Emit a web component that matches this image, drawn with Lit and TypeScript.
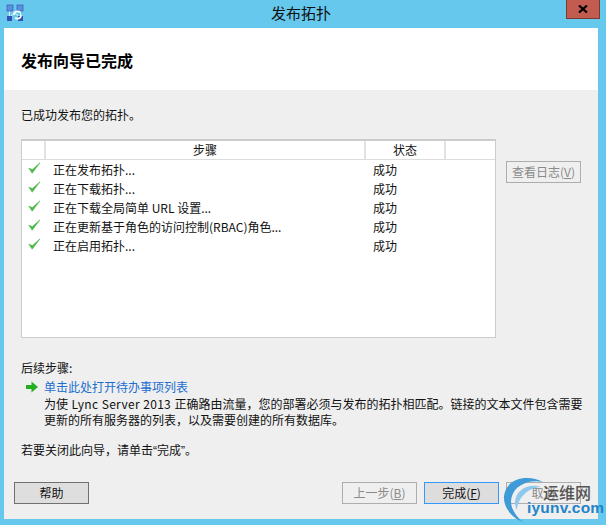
import { LitElement, html, css, svg } from "lit";
import { customElement } from "lit/decorators.js";

const rows = ["正在发布拓扑...", "正在下载拓扑...", "正在下载全局简单 URL 设置...", "正在更新基于角色的访问控制(RBAC)角色...", "正在启用拓扑..."];

const check = svg`<svg class="chk" width="13" height="12" viewBox="0 0 13 12"><path d="M0.8 6.2 L4.2 11.2 L12 0.8 L4.4 7.6 Z" fill="#4dbb4a" stroke="#4dbb4a" stroke-width=".6" stroke-linejoin="round"/></svg>`;

@customElement("app-root")
export class AppRoot extends LitElement {
  static styles = css`
    :host { display: block; width: 606px; height: 525px; overflow: hidden; position: relative; font-family: "Noto Sans CJK SC", "Noto Sans", sans-serif; font-size: 12px; color: #111; }
    .win { width: 606px; height: 525px; background: #65c8ec; display: flex; flex-direction: column; box-sizing: border-box; padding: 0 8px 6px 4px; }
    .title { height: 28px; flex: none; display: flex; align-items: center; justify-content: center; position: relative; font-size: 15px; padding-bottom: 4px; box-sizing: border-box; }
    .appicon { position: absolute; left: 2px; top: 4px; }
    .close { position: absolute; left: 562px; top: 0; width: 34px; height: 19px; background: #c35c50; border: 1px solid #7a3a34; border-top: none; box-sizing: border-box; display: flex; align-items: center; justify-content: center; }
    .body { flex: 1; background: #efefef; display: flex; flex-direction: column; min-height: 0; }
    .head { height: 62px; flex: none; background: #fff; box-sizing: border-box; padding: 21px 0 0 17px; font-size: 16px; font-weight: 700; line-height: 22px; color: #000; }
    .main { flex: 1; padding: 16px 17px 0; position: relative; display: flex; flex-direction: column; }
    .intro { line-height: 18px; height: 18px; }
    .mid { display: flex; margin-top: 15px; }
    .table { width: 475px; height: 199px; box-sizing: border-box; background: #fff; border: 1px solid #ccc; border-top-width: 2px; }
    .thead { display: grid; grid-template-columns: 24px 320px 80px 1fr; height: 18px; border-bottom: 1px solid #dcdcdc; box-sizing: content-box; }
    .th { text-align: center; line-height: 18px; border-right: 2px solid #e2e2e2; box-sizing: border-box; }
    .th:last-child { border-right: none; }
    .row { display: grid; grid-template-columns: 7px 24px 320px 1fr; height: 19px; line-height: 19px; align-items: center; }
    .chk { display: block; margin-top: -3px; grid-column: 1 / 3; margin-left: 6px; }
    .step { white-space: pre; }
    .log { margin: 22px 0 0 10px; width: 75px; height: 22px; box-sizing: border-box; border: 1px solid #adadad; color: #8a8a8a; text-align: center; line-height: 20px; white-space: nowrap; }
    u { text-underline-offset: 1px; }
    .next { margin-top: 21px; line-height: 18px; }
    .linkrow { display: flex; align-items: center; height: 19px; }
    .arrow { margin: 0 6px 0 5px; flex: none; }
    .link { color: #1c6ed0; }
    .desc { margin: 0 0 0 23px; line-height: 16px; width: 540px; }
    .lat { letter-spacing: 0.3px; word-spacing: 0.4px; }
    .close-note { margin-top: 13px; line-height: 18px; }
    .q { font-family: "Liberation Sans", sans-serif; }
    .foot { position: absolute; left: 10px; right: 17px; top: 392px; display: flex; align-items: center; }
    .btn { width: 75px; height: 22px; box-sizing: border-box; border: 1px solid #707070; background: #dedede; text-align: center; line-height: 20px; white-space: nowrap; }
    .spacer { flex: 1; }
    .btn.dis { background: transparent; border-color: #adadad; color: #8a8a8a; }
    .btn.pri { border-color: #3399ff; background: #dddddd; margin: 0 7px; }
    .wm { position: absolute; left: 503px; top: 476px; width: 103px; height: 49px; pointer-events: none; }
    .wmcn { position: absolute; left: 40px; top: 5px; font-size: 16px; font-weight: 500; color: #555; line-height: 22px; white-space: nowrap; }
    .wmen { position: absolute; left: 24px; top: 22px; font-family: "Liberation Sans", sans-serif; font-size: 15.5px; font-weight: 700; color: #2383c9; line-height: 20px; letter-spacing: 0.2px; white-space: nowrap; }
    .wmarc { position: absolute; left: 0; top: 0; }
  `;

  render() {
    return html`<div class="win">
      <div class="title">
        <svg class="appicon" width="18" height="18" viewBox="0 0 18 18">
          <path d="M3.5 5 V13 M14.5 5 V13 M3.5 4 L14.5 14 M14.5 4 L5 12" stroke="#e8f2fb" stroke-width="1" fill="none"/>
          <rect x="1" y="1" width="6" height="6" fill="#5b8fe0" stroke="#3a66b8" stroke-width=".8"/>
          <rect x="11" y="1" width="6" height="6" fill="#5b8fe0" stroke="#3a66b8" stroke-width=".8"/>
          <rect x="1" y="12" width="5" height="5" fill="#2f55b0"/>
          <rect x="12" y="12" width="5" height="5" fill="#2f55b0"/>
          <circle cx="11.5" cy="11" r="3.6" fill="none" stroke="#fff" stroke-width="1.8" stroke-dasharray="8 3"/>
        </svg>
        发布拓扑
        <div class="close"><svg width="10" height="8" viewBox="0 0 10 8"><path d="M1 .5 L9 7.5 M9 .5 L1 7.5" stroke="#000" stroke-width="2.2"/></svg></div>
      </div>
      <div class="body">
        <div class="head">发布向导已完成</div>
        <div class="main">
          <div class="intro">已成功发布您的拓扑。</div>
          <div class="mid">
            <div class="table">
              <div class="thead"><div class="th"></div><div class="th">步骤</div><div class="th">状态</div><div class="th"></div></div>
              ${rows.map((r) => html`<div class="row">${check}<div class="step">${r}</div><div class="st">成功</div></div>`)}
            </div>
            <div class="log">查看日志(<u>V</u>)</div>
          </div>
          <div class="next">后续步骤:</div>
          <div class="linkrow">
            <svg class="arrow" width="12" height="12" viewBox="0 0 12 12"><path d="M0 4 H5.5 V.5 L12 6 L5.5 11.5 V8 H0 Z" fill="#22b022"/></svg>
            <span class="link">单击此处打开待办事项列表</span>
          </div>
          <div class="desc">为使<span class="lat"> Lync Server 2013 </span>正确路由流量，您的部署必须与发布的拓扑相匹配。链接的文本文件包含需要更新的所有服务器的列表，以及需要创建的所有数据库。</div>
          <div class="close-note">若要关闭此向导，请单击<span class="q">“</span>完成<span class="q">”</span>。</div>
          <div class="foot">
            <div class="btn">帮助</div>
            <div class="spacer"></div>
            <div class="btn dis">上一步(<u>B</u>)</div>
            <div class="btn pri">完成(<u>F</u>)</div>
            <div class="btn dis">取消</div>
          </div>
        </div>
      </div>
      <div class="wm">
        <svg class="wmarc" width="60" height="49" viewBox="0 0 60 49">
          <path d="M40 6 C25 -2 3 2 1 20 C0 30 8 42 20 46 C10 38 6 28 9 20 C12 10 25 3 40 6 Z" fill="#3f9ad8"/>
          <path d="M38 11 C25 7 13 14 12 26 C12 30 13 32 14 34 C15 22 24 12 38 11 Z" fill="#8ec8ec"/>
        </svg>
        <div class="wmcn">运维网</div>
        <div class="wmen">iyunv.com</div>
      </div>
    </div>`;
  }
}
